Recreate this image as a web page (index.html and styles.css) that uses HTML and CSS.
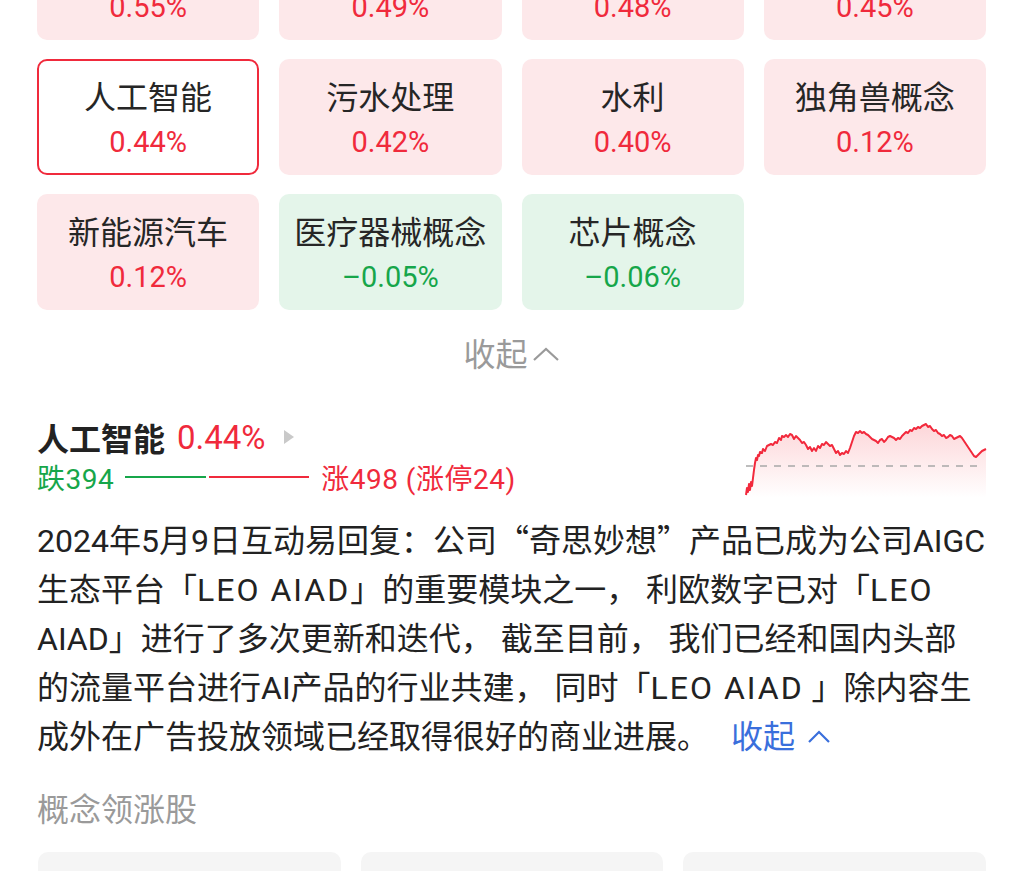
FILE: index.html
```html
<!DOCTYPE html>
<html lang="zh-CN">
<head>
<meta charset="utf-8">
<title>概念板块</title>
<link rel="stylesheet" href="styles.css">
</head>
<body>
<div class="page">
  <div class="tiles">
    <div class="tile up"><div class="name">概念</div><div class="pct">0.55%</div></div>
    <div class="tile up"><div class="name">概念</div><div class="pct">0.49%</div></div>
    <div class="tile up"><div class="name">概念</div><div class="pct">0.48%</div></div>
    <div class="tile up"><div class="name">概念</div><div class="pct">0.45%</div></div>
    <div class="tile selected"><div class="name">人工智能</div><div class="pct">0.44%</div></div>
    <div class="tile up"><div class="name">污水处理</div><div class="pct">0.42%</div></div>
    <div class="tile up"><div class="name">水利</div><div class="pct">0.40%</div></div>
    <div class="tile up"><div class="name">独角兽概念</div><div class="pct">0.12%</div></div>
    <div class="tile up"><div class="name">新能源汽车</div><div class="pct">0.12%</div></div>
    <div class="tile down"><div class="name">医疗器械概念</div><div class="pct">–0.05%</div></div>
    <div class="tile down"><div class="name">芯片概念</div><div class="pct">–0.06%</div></div>
  </div>

  <div class="collapse">
    <span>收起</span>
    <svg class="chev" width="28" height="16" viewBox="0 0 28 16"><polyline points="2,14 14,3 26,14" fill="none" stroke="#9a9a9a" stroke-width="2.2"/></svg>
  </div>

  <div class="summary">
    <div class="summary-left">
      <div class="heading">
        <span class="h-name">人工智能</span>
        <span class="h-pct">0.44%</span>
        <svg class="tri" width="12" height="16" viewBox="0 0 12 16"><polygon points="1,1 11,8 1,15" fill="#c9c9c9"/></svg>
      </div>
      <div class="stats">
        <span class="fall">跌394</span>
        <span class="bar bar-fall"></span>
        <span class="bar bar-rise"></span>
        <span class="rise">涨498 (涨停24)</span>
      </div>
    </div>
    <svg class="chart" width="245" height="80" viewBox="0 0 245 80">
      <defs>
        <linearGradient id="g" x1="0" y1="0" x2="0" y2="1">
          <stop offset="0" stop-color="#f5323f" stop-opacity="0.2"/>
          <stop offset="1" stop-color="#f5323f" stop-opacity="0"/>
        </linearGradient>
      </defs>
      <path fill="url(#g)" d="M2,77 L3,70 L4,74 L5,66 L6,72 L7,64 L8,68 L9,60 L10,52 L11,45 L12,40 L13,42 L14,37 L15,38 L16,34 L18,35 L19,31 L21,33 L23,28 L25,27 L27,26 L29,27 L31,24 L33,25 L35,20 L37,22 L38,18 L40,19 L42,17 L44,19 L46,16 L48,17 L50,21 L52,18 L54,20 L56,22 L58,25 L60,24 L62,27 L64,31 L66,29 L68,33 L70,30 L72,33 L74,28 L76,30 L78,26 L80,27 L82,24 L84,26 L86,28 L88,27 L90,31 L92,35 L94,33 L96,37 L98,35 L100,36 L102,33 L104,35 L106,30 L108,24 L110,18 L112,14 L114,15 L116,13 L118,15 L120,14 L122,16 L124,17 L126,19 L128,21 L130,22 L132,23 L134,25 L136,22 L138,21 L140,24 L142,22 L144,19 L146,18 L148,19 L150,20 L152,22 L154,20 L156,21 L158,18 L160,16 L162,14 L164,15 L166,12 L168,13 L170,10 L172,11 L174,9 L176,10 L178,8 L180,7 L182,6 L184,9 L186,8 L188,11 L190,13 L192,12 L194,15 L196,16 L198,18 L200,17 L202,20 L204,19 L206,17 L208,18 L210,21 L212,20 L214,19 L216,18 L218,20 L220,23 L222,26 L224,29 L226,32 L228,35 L230,38 L232,39 L234,37 L236,35 L238,33 L240,32 L242,31 L242,80 L2,80 Z"/>
      <line x1="2" y1="48" x2="238" y2="48" stroke="#a8a8a8" stroke-width="1.5" stroke-dasharray="7 7"/>
      <polyline fill="none" stroke="#f2293c" stroke-width="2" stroke-linejoin="round" points="2,77 3,70 4,74 5,66 6,72 7,64 8,68 9,60 10,52 11,45 12,40 13,42 14,37 15,38 16,34 18,35 19,31 21,33 23,28 25,27 27,26 29,27 31,24 33,25 35,20 37,22 38,18 40,19 42,17 44,19 46,16 48,17 50,21 52,18 54,20 56,22 58,25 60,24 62,27 64,31 66,29 68,33 70,30 72,33 74,28 76,30 78,26 80,27 82,24 84,26 86,28 88,27 90,31 92,35 94,33 96,37 98,35 100,36 102,33 104,35 106,30 108,24 110,18 112,14 114,15 116,13 118,15 120,14 122,16 124,17 126,19 128,21 130,22 132,23 134,25 136,22 138,21 140,24 142,22 144,19 146,18 148,19 150,20 152,22 154,20 156,21 158,18 160,16 162,14 164,15 166,12 168,13 170,10 172,11 174,9 176,10 178,8 180,7 182,6 184,9 186,8 188,11 190,13 192,12 194,15 196,16 198,18 200,17 202,20 204,19 206,17 208,18 210,21 212,20 214,19 216,18 218,20 220,23 222,26 224,29 226,32 228,35 230,38 232,39 234,37 236,35 238,33 240,32 242,31"/>
    </svg>
  </div>

  <p class="desc">2024年5月9日互动易回复：公司<span class="q">“</span>奇思妙想<span class="q">”</span>产品已成为公司AIGC<br>生态平台「<span class="lat">LEO AIAD</span>」的重要模块之一， 利欧数字已对「<span class="lat">LEO</span><br>AIAD」进行了多次更新和迭代， 截至目前， 我们已经和国内头部<br>的流量平台进行AI产品的行业共建， 同时「<span class="lat">LEO AIAD</span> 」除内容生<br>成外在广告投放领域已经取得很好的商业进展。 <span class="more">收起<svg class="chev-blue" width="24" height="14" viewBox="0 0 24 14"><polyline points="2,12 12,2 22,12" fill="none" stroke="#3a6fdc" stroke-width="2.2"/></svg></span></p>

  <div class="section-title">概念领涨股</div>

  <div class="cards">
    <div class="card"></div>
    <div class="card"></div>
    <div class="card"></div>
  </div>
</div>
</body>
</html>
```

FILE: styles.css
```css
* { box-sizing: border-box; }
html, body { margin: 0; padding: 0; background: #fff; overflow: hidden; }
body {
  font-family: "Roboto", "Noto Sans CJK SC", sans-serif;
  color: #222;
}
.page {
  width: 1024px;
  height: 871px;
  padding: 0 38px 0 37px;
  overflow: hidden;
}
.tiles {
  margin-top: -76px;
  display: grid;
  grid-template-columns: repeat(4, 1fr);
  column-gap: 20px;
  row-gap: 19px;
}
.tile {
  height: 116px;
  border-radius: 10px;
  display: flex;
  flex-direction: column;
  align-items: center;
  justify-content: center;
  padding-top: 4px;
}
.tile.up { background: #fde8ea; }
.tile.down { background: #e4f5ea; }
.tile.selected { background: #fff; border: 2px solid #f02a3c; }
.tile .name {
  font-size: 32px;
  line-height: 40px;
  color: #262626;
}
.tile .pct {
  font-size: 29px;
  line-height: 36px;
  margin-top: 6px;
}
.tile.up .pct, .tile.selected .pct { color: #f02a3c; }
.tile.down .pct { color: #16a64a; }

.collapse {
  margin-top: 22px;
  height: 40px;
  display: flex;
  justify-content: center;
  align-items: center;
  gap: 4px;
  font-size: 32px;
  color: #9a9a9a;
}
.collapse .chev { margin-top: 4px; }

.summary {
  margin-top: 45px;
  display: flex;
  justify-content: space-between;
  align-items: flex-start;
}
.heading {
  display: flex;
  align-items: center;
  height: 40px;
}
.h-name {
  font-size: 32px;
  font-weight: 700;
  color: #222;
}
.h-pct {
  font-size: 33px;
  color: #f02a3c;
  margin-left: 12px;
}
.tri { margin-left: 17px; }
.stats {
  margin-top: 5px;
  display: flex;
  align-items: center;
  height: 30px;
  font-size: 28px;
  letter-spacing: 0.5px;
}
.fall { color: #16a64a; }
.rise { color: #f02a3c; }
.bar { height: 2px; display: block; }
.bar-fall { width: 81px; background: #16a64a; margin-left: 11px; }
.bar-rise { width: 100px; background: #f02a3c; margin-left: 3px; margin-right: 12px; }
.chart { margin-top: 1px; margin-right: -3px; }

.desc {
  margin: 19px 0 0 0;
  font-size: 32px;
  line-height: 49px;
  color: #222;
  white-space: pre;
}
.q { font-family: "Noto Sans CJK SC", sans-serif; line-height: 0; }
.lat { letter-spacing: 2px; }
.more { color: #3a6fdc; margin-left: 14px; }
.chev-blue { margin-left: 12px; vertical-align: 4px; }

.section-title {
  margin-top: 28px;
  font-size: 32px;
  line-height: 40px;
  color: #9a9a9a;
}
.cards {
  margin-top: 22px;
  display: grid;
  grid-template-columns: repeat(3, 1fr);
  gap: 20px;
  padding-left: 1px;
}
.card {
  height: 60px;
  background: #f5f5f5;
  border-radius: 10px 10px 0 0;
}
```
